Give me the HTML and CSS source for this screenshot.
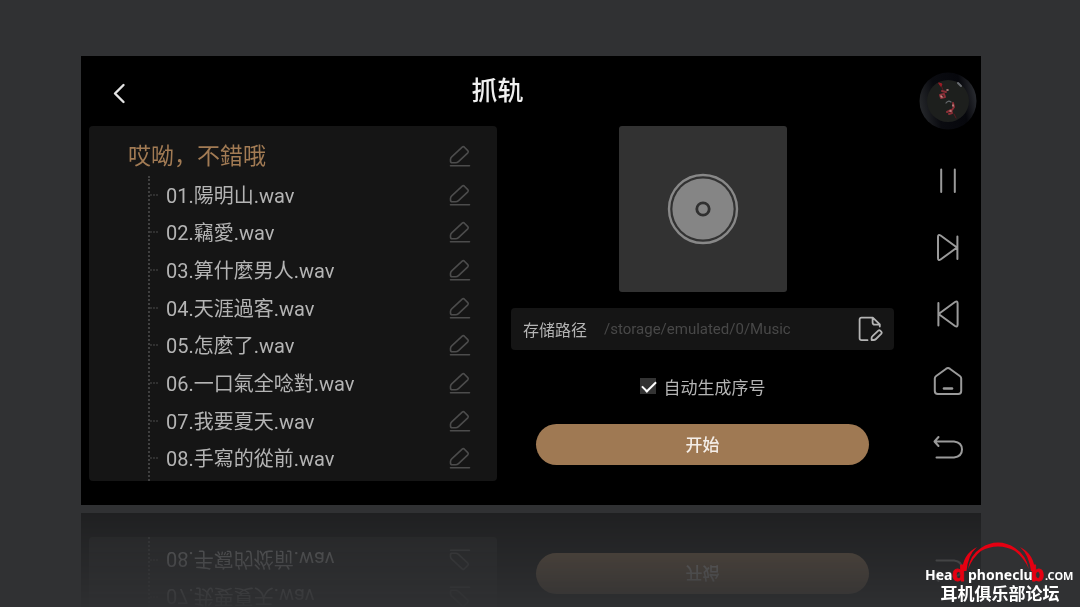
FILE: index.html
```html
<!DOCTYPE html>
<html lang="zh">
<head>
    <meta charset="UTF-8">
    <meta name="viewport" content="width=device-width, initial-scale=1.0">
    <title>抓轨</title>
    <link rel="stylesheet" href="styles.css">
</head>
<body>
    <svg class="symbols" width="0" height="0" aria-hidden="true">
        <symbol id="pencil" viewBox="0 0 22 22">
            <path d="M13.2 2.2Q14.3 1.2 15.4 2.2L18.8 5.6Q19.8 6.7 18.8 7.8L9.5 16.6Q8.2 17.8 6.5 17.8H3.2Q1.5 17.8 1.5 16V14.5Q1.5 13 2.7 11.9ZM1.5 20.7H20.5"/>
        </symbol>
    </svg>

    <div class="screen">
        <div class="main">
            <header class="header">
                <button class="icon-btn" aria-label="返回">
                    <svg class="back" width="14" height="22" viewBox="0 0 14 22"><path d="M11.5 3L3 11.5L11.5 20"/></svg>
                </button>
                <h1 class="title">抓轨</h1>
            </header>

            <div class="columns">
                <section class="album">
                    <div class="album-head">
                        <h2 class="album-name">哎呦，不錯哦</h2>
                        <button class="icon-btn edit" aria-label="编辑"><svg width="22" height="22"><use href="#pencil"/></svg></button>
                    </div>
                    <ul class="tracks">
                        <li class="track"><span class="name">01.陽明山.wav</span><button class="icon-btn edit" aria-label="编辑"><svg width="22" height="22"><use href="#pencil"/></svg></button></li>
                        <li class="track"><span class="name">02.竊愛.wav</span><button class="icon-btn edit" aria-label="编辑"><svg width="22" height="22"><use href="#pencil"/></svg></button></li>
                        <li class="track"><span class="name">03.算什麼男人.wav</span><button class="icon-btn edit" aria-label="编辑"><svg width="22" height="22"><use href="#pencil"/></svg></button></li>
                        <li class="track"><span class="name">04.天涯過客.wav</span><button class="icon-btn edit" aria-label="编辑"><svg width="22" height="22"><use href="#pencil"/></svg></button></li>
                        <li class="track"><span class="name">05.怎麼了.wav</span><button class="icon-btn edit" aria-label="编辑"><svg width="22" height="22"><use href="#pencil"/></svg></button></li>
                        <li class="track"><span class="name">06.一口氣全唸對.wav</span><button class="icon-btn edit" aria-label="编辑"><svg width="22" height="22"><use href="#pencil"/></svg></button></li>
                        <li class="track"><span class="name">07.我要夏天.wav</span><button class="icon-btn edit" aria-label="编辑"><svg width="22" height="22"><use href="#pencil"/></svg></button></li>
                        <li class="track"><span class="name">08.手寫的從前.wav</span><button class="icon-btn edit" aria-label="编辑"><svg width="22" height="22"><use href="#pencil"/></svg></button></li>
                    </ul>
                </section>

                <section class="rip">
                    <div class="cover">
                        <svg width="72" height="72" viewBox="0 0 72 72">
                            <circle cx="36" cy="36" r="34" fill="none" stroke="#888" stroke-width="2.4"/>
                            <circle cx="36" cy="36" r="30.6" fill="#858585"/>
                            <circle cx="36" cy="36" r="6.2" fill="#858585" stroke="#303030" stroke-width="2.8"/>
                        </svg>
                    </div>

                    <div class="path">
                        <label for="path">存储路径</label>
                        <input class="path-input" type="text" id="path" placeholder="/storage/emulated/0/Music">
                        <button class="icon-btn" aria-label="选择路径">
                            <svg class="file" width="26" height="26" viewBox="0 0 26 26">
                                <path d="M9.5 24.2H3.6Q1.6 24.2 1.6 22.2V3.6Q1.6 1.6 3.6 1.6H14.8L21.8 8.4V10.5M14.6 2V6.4Q14.6 8.6 16.8 8.6H21.6"/>
                                <path d="M20.3 14.6Q21.3 13.8 22.2 14.6L23.4 15.8Q24.2 16.7 23.4 17.6L18 23Q17 24 15.6 24H13.6V22Q13.6 20.9 14.5 20.1Z"/>
                            </svg>
                        </button>
                    </div>

                    <label class="auto"><input type="checkbox" class="check" checked>自动生成序号</label>

                    <button class="start">开始</button>
                </section>
            </div>
        </div>

        <nav class="side">
            <svg class="vinyl" width="60" height="60" viewBox="0 0 60 60">
                <defs>
                    <linearGradient id="rim" x1="0" y1="0.6" x2="1" y2="0.4">
                        <stop offset="0" stop-color="#26282b"/>
                        <stop offset="0.3" stop-color="#0a0b10"/>
                        <stop offset="0.75" stop-color="#06070c"/>
                        <stop offset="1" stop-color="#2a2c31"/>
                    </linearGradient>
                </defs>
                <circle cx="30" cy="30" r="28.5" fill="url(#rim)"/>
                <circle cx="30" cy="30" r="21" fill="#1d1f1d"/>
                <g stroke="#8a2e36" stroke-width="2" fill="none">
                    <path d="M23 14l2 5M36 43l2 4" stroke="#5a1a20" stroke-width="1"/>
                    <path d="M22 24l4-1 1 3-4 1zM24 20l4 1M35 32l1 4-2 3M29 41l4-2 1 3-3 1"/>
                </g>
                <path d="M23 25l1 1M29 19l1 0M32 40l1 0M35 34v1" stroke="#c88a88" stroke-width="1.6"/>
                <path d="M21 12l3 1-1 2z" stroke="#a01c26" fill="#a01c26"/>
                <path d="M28 32q2-3 5-1" stroke="#666a6e" stroke-width="1.2"/>
                <path d="M40 12l3 3" stroke="#6a6d72" stroke-width="2"/>
            </svg>
            <button class="icon-btn nav-btn" aria-label="暂停">
                <svg width="30" height="30" viewBox="0 0 30 30"><path d="M8.2 3.5V26M21.8 3.5V26"/></svg>
            </button>
            <button class="icon-btn nav-btn" aria-label="下一首">
                <svg width="30" height="30" viewBox="0 0 30 30"><path d="M5 4Q5 1 7.6 2.5L24 14.5L7.6 26.5Q5 28 5 25ZM24.4 3.5V26"/></svg>
            </button>
            <button class="icon-btn nav-btn" aria-label="上一首">
                <svg width="30" height="30" viewBox="0 0 30 30"><path d="M24.6 3.5Q24.6 .5 22 2L5.6 14L22 26Q24.6 27.5 24.6 24.5ZM5.4 3V25.5"/></svg>
            </button>
            <button class="icon-btn nav-btn" aria-label="主页">
                <svg width="30" height="30" viewBox="0 0 30 30"><path d="M13.2 1.7Q15 .5 16.8 1.7L26.8 9Q28.2 10 28.2 11.6V24Q28.2 27 25.2 27H4.8Q1.8 27 1.8 24V11.6Q1.8 10 3.2 9Z"/><path d="M11 21.5H19" stroke-width="2.6"/></svg>
            </button>
            <button class="icon-btn nav-btn" aria-label="后退">
                <svg width="30" height="30" viewBox="0 0 30 30"><path d="M5.5 3L1.5 7.5L5.5 12M2 7.5H21Q29 8.5 29 15.5T21 23.5H3.5"/></svg>
            </button>
        </nav>
    </div>

    <div class="watermark">
        <svg class="wordmark" width="154" height="44" viewBox="0 0 154 44">
            <g fill="#e50012">
                <path d="M45 29Q47 15 58 8Q66 2.500 75 2.500Q84 2.500 92 8Q103 15 106 29Q101 18 92 11Q84 6.500 75 6.500Q66 6.500 58 11Q50 17 45 29Z"/>
                <path d="M39 31Q40 14 54 7Q45 15 43.500 31Z"/>
                <path d="M112 31Q111 14 97 7Q106 15 108 31Z"/>
            </g>
            <text class="mark" x="2" y="40">Hea</text>
            <text class="mark red" x="29" y="41">d</text>
            <text class="mark" x="45" y="40">phoneclu</text>
            <text class="mark red" x="108" y="41">b</text>
            <text class="mark small" x="122" y="40">.COM</text>
        </svg>
        <p class="forum">耳机俱乐部论坛</p>
    </div>
</body>
</html>
```
FILE: styles.css
```css
* {
    box-sizing: border-box;
}

body {
    font-family: Roboto, "Noto Sans CJK SC", sans-serif;
    margin: 0;
    min-height: 100vh;
    padding: 56px 99px 0 81px;
    background: #303133;
    color: #b4b4b4;
    overflow: hidden;
}

h1, h2, ul, p {
    margin: 0;
    padding: 0;
    font-weight: 400;
}

button, input {
    font-family: inherit;
}

.symbols {
    position: absolute;
}

svg {
    display: block;
    fill: none;
    stroke-linecap: round;
    stroke-linejoin: round;
}

.icon-btn {
    display: flex;
    align-items: center;
    justify-content: center;
    padding: 0;
    border: none;
    background: none;
    cursor: pointer;
}

.screen {
    display: flex;
    padding-left: 8px;
    background: #000;
    -webkit-box-reflect: below 8px linear-gradient(transparent 77%, rgba(0, 0, 0, 0.34));
}

.main {
    flex: 1;
    margin-right: 21px;
    padding-bottom: 24px;
}

.header {
    display: grid;
    grid-template-columns: 60px 1fr 48px;
    height: 70px;
    align-items: center;
}

.back {
    margin-top: 3px;
    stroke: #e4e4e4;
    stroke-width: 2.4;
}

.title {
    font-size: 26px;
    line-height: 36px;
    font-weight: 500;
    text-align: center;
    color: #f0f0f0;
}

.columns {
    display: grid;
    grid-template-columns: 408fr 383fr;
    gap: 14px;
}

.album {
    display: flex;
    flex-direction: column;
    padding: 10px 26px 0 39px;
    border-radius: 4px;
    background: #151515;
    font-family: Roboto, "Noto Sans CJK TC", sans-serif;
}

.album-head {
    display: flex;
    align-items: center;
    justify-content: space-between;
    height: 40px;
}

.album-name {
    padding-top: 2px;
    font-size: 23px;
    line-height: 32px;
    color: #a27b54;
}

.edit {
    stroke: #4c4c4c;
    stroke-width: 1.6;
}

.tracks {
    flex: 1;
    display: flex;
    flex-direction: column;
    margin-left: 20px;
    padding-bottom: 4px;
    border-left: 2px dotted #404040;
    list-style: none;
}

.track {
    flex: 1;
    display: flex;
    align-items: center;
}

.track::before {
    content: "";
    width: 8px;
    margin-right: 8px;
    border-top: 2px dotted #303030;
}

.name {
    flex: 1;
    padding-top: 2px;
    font-size: 20px;
    line-height: 28px;
}

.rip {
    display: flex;
    flex-direction: column;
    align-items: center;
    padding-bottom: 16px;
}

.cover {
    display: flex;
    align-items: center;
    justify-content: center;
    width: 168px;
    height: 166px;
    border-radius: 3px;
    background: #323232;
}

.path {
    display: flex;
    align-items: center;
    align-self: stretch;
    gap: 17px;
    height: 42px;
    margin-top: 16px;
    padding: 0 10px 0 12px;
    border-radius: 4px;
    background: #151515;
    font-size: 16px;
}

.path-input {
    flex: 1;
    min-width: 0;
    padding: 0;
    border: none;
    outline: none;
    background: none;
    font-size: 15px;
    color: #b4b4b4;
}

.path-input::placeholder {
    color: #484848;
}

.file {
    stroke: #b4b4b4;
    stroke-width: 1.8;
}

.auto {
    display: flex;
    align-items: center;
    gap: 8px;
    height: 42px;
    margin: 15px 0 17px;
    font-size: 17px;
}

.check {
    appearance: none;
    width: 16px;
    height: 16px;
    margin: 0;
    background: #333;
}

.check:checked::before {
    content: "";
    display: block;
    width: 12px;
    height: 6px;
    margin: 3px 2px;
    border: solid #fff;
    border-width: 0 0 2px 2px;
    transform: rotate(-45deg);
}

.start {
    width: 87%;
    height: 41px;
    padding: 0 0 2px;
    border: none;
    border-radius: 21px;
    background: #9f7953;
    font-size: 17px;
    font-weight: 500;
    color: #f4eee8;
    cursor: pointer;
}

.side {
    display: flex;
    flex-direction: column;
    align-items: center;
    width: 66px;
    padding-top: 15px;
}

.vinyl {
    margin-bottom: 16px;
}

.nav-btn {
    width: 66px;
    height: 67px;
    stroke: #9a9a9a;
    stroke-width: 2;
}

.watermark {
    position: fixed;
    right: 3px;
    bottom: 3px;
    display: flex;
    flex-direction: column;
    align-items: center;
    color: #fff;
}

.wordmark {
    overflow: visible;
}

.mark {
    font-family: "Noto Sans", sans-serif;
    font-size: 14px;
    font-weight: 700;
    fill: #fff;
}

.red {
    font-size: 21px;
    fill: #e50012;
    stroke: #e50012;
    stroke-width: 0.8;
}

.small {
    font-size: 11px;
}

.forum {
    font-size: 17px;
    line-height: 20px;
    font-weight: 700;
}
```
